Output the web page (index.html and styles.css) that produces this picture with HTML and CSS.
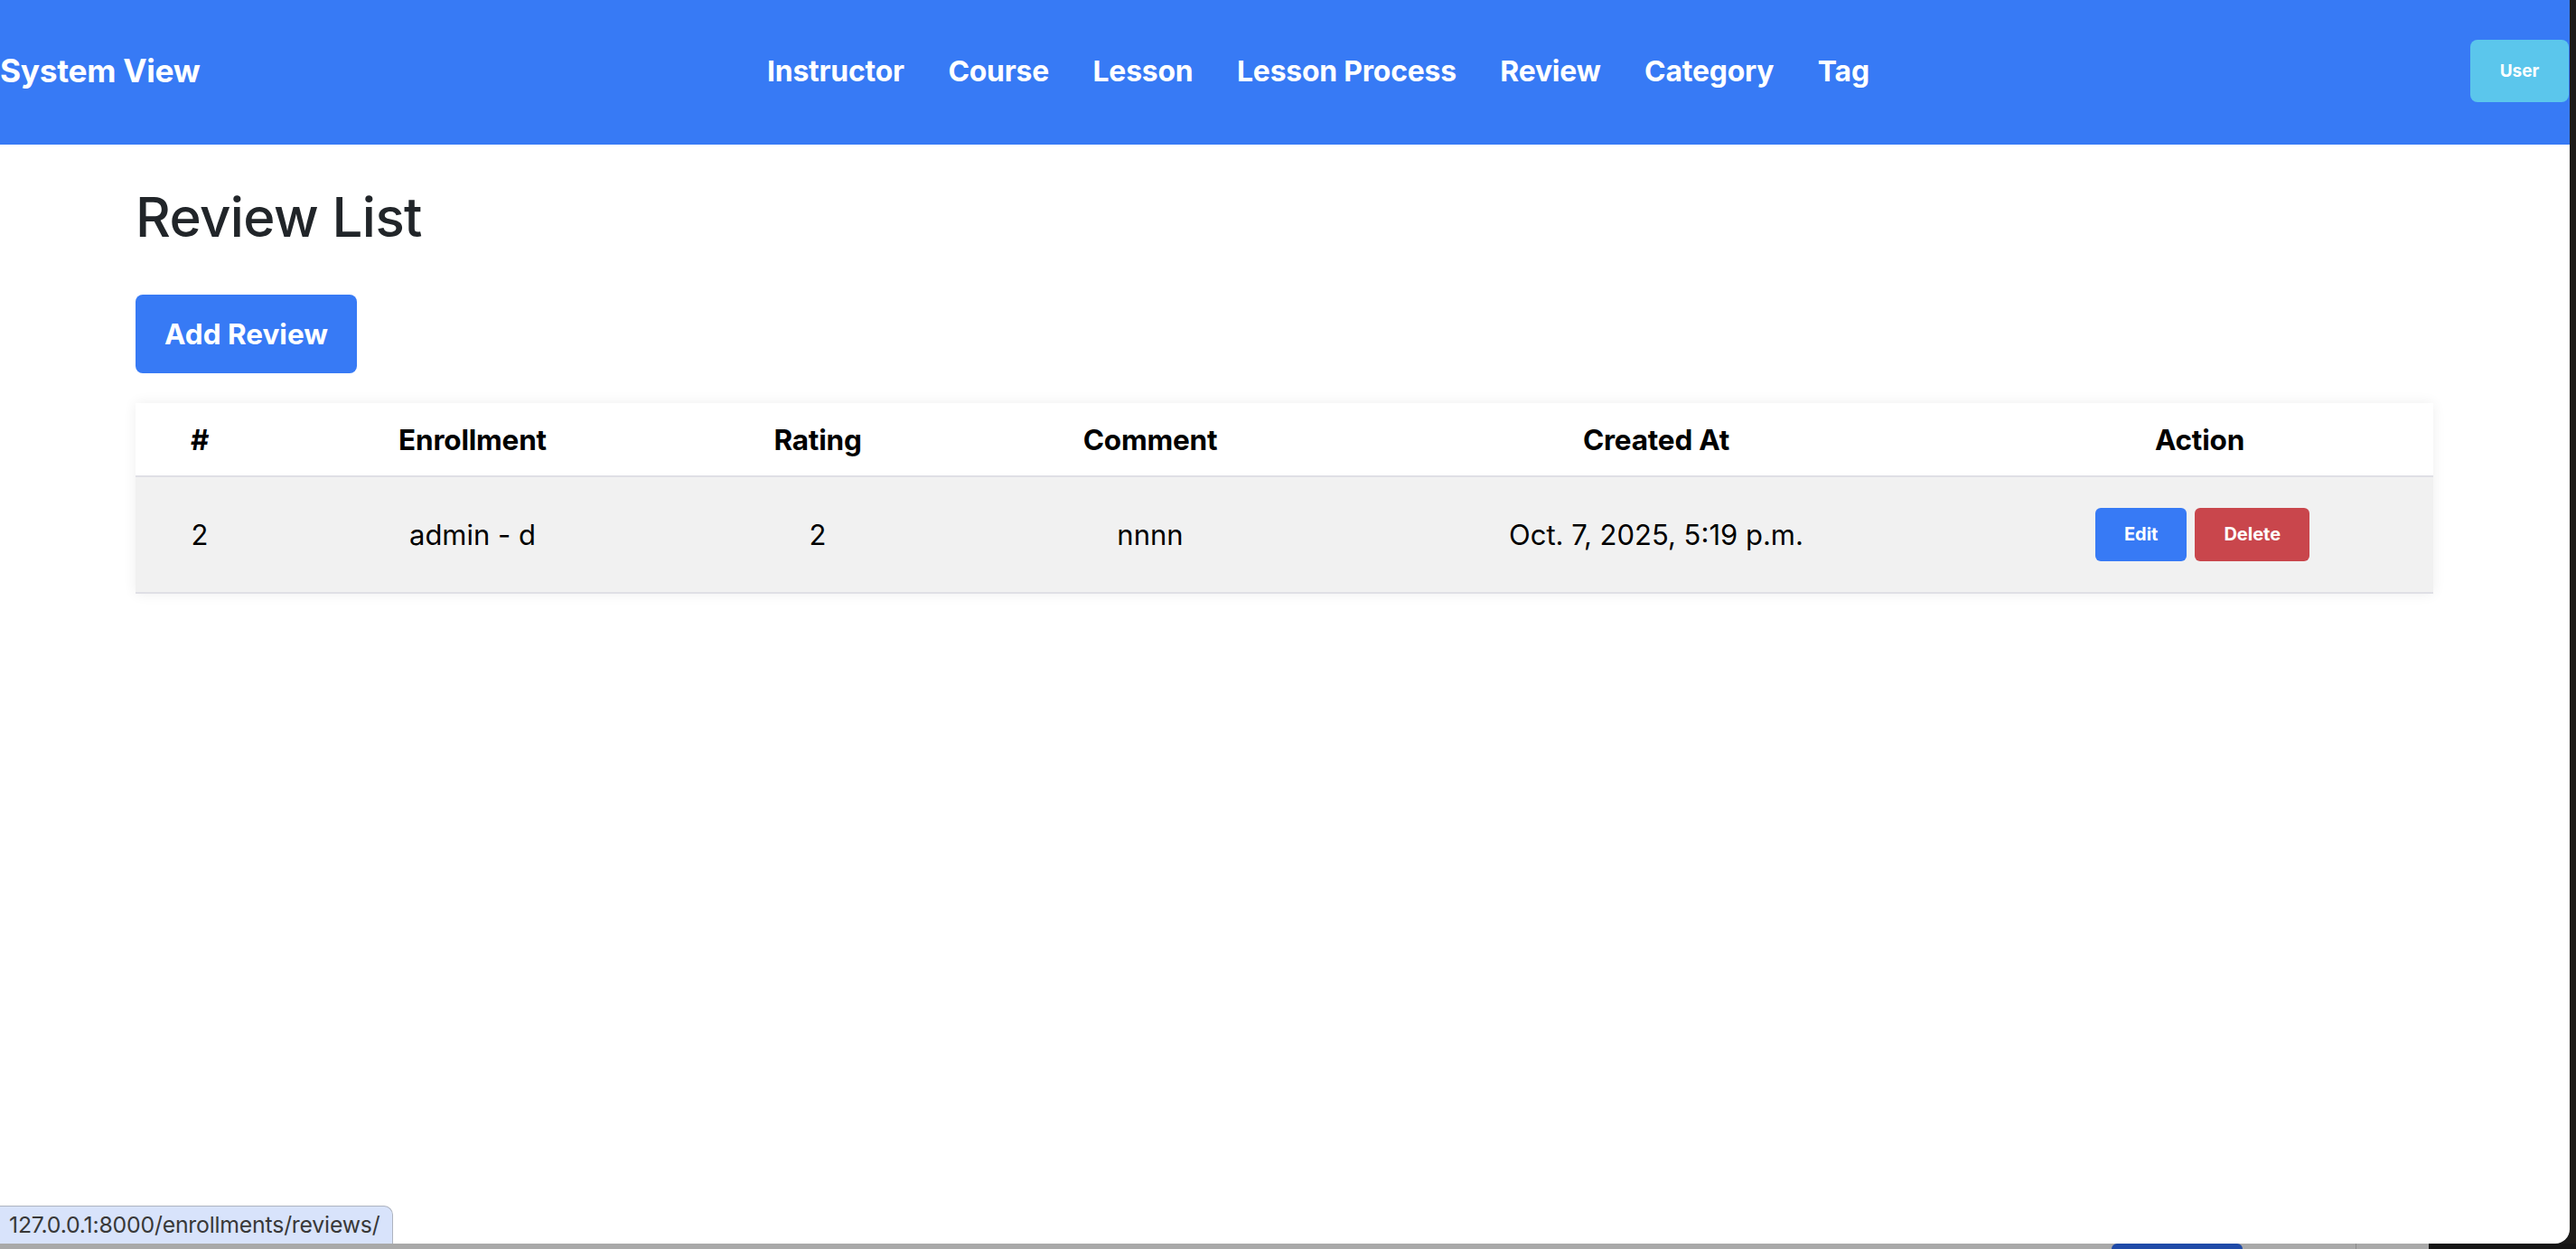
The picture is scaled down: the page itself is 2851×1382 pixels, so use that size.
FILE: index.html
```html
<!DOCTYPE html>
<html lang="en">
<head>
<meta charset="utf-8">
<title>Review List</title>
<link rel="stylesheet" href="styles.css">
</head>
<body>
<div class="screen">
  <div class="window">
    <header class="topbar">
      <a class="brand" href="#">System View</a>
      <nav class="nav">
        <a class="nav-link" href="#">Instructor</a>
        <a class="nav-link" href="#">Course</a>
        <a class="nav-link" href="#">Lesson</a>
        <a class="nav-link" href="#">Lesson Process</a>
        <a class="nav-link" href="#">Review</a>
        <a class="nav-link" href="#">Category</a>
        <a class="nav-link" href="#">Tag</a>
      </nav>
      <button class="user-btn" type="button">User</button>
    </header>

    <main class="container">
      <h1 class="page-title">Review List</h1>
      <a class="btn-add" href="#">Add Review</a>
      <table class="review-table">
        <thead>
          <tr>
            <th class="col-id">#</th>
            <th class="col-enroll">Enrollment</th>
            <th class="col-rating">Rating</th>
            <th class="col-comment">Comment</th>
            <th class="col-created">Created At</th>
            <th class="col-action">Action</th>
          </tr>
        </thead>
        <tbody>
          <tr>
            <td>2</td>
            <td>admin - d</td>
            <td>2</td>
            <td>nnnn</td>
            <td>Oct. 7, 2025, 5:19 p.m.</td>
            <td>
              <div class="action-group">
                <a class="btn-sm btn-edit" href="#">Edit</a>
                <a class="btn-sm btn-delete" href="#">Delete</a>
              </div>
            </td>
          </tr>
        </tbody>
      </table>
    </main>

    <div class="status-url">127.0.0.1:8000/enrollments/reviews/</div>
  </div>
  <div class="right-edge"></div>
</div>
<div class="dock-strip">
  <div class="dock-gray">
    <span class="dock-divider"></span>
    <span class="dock-blue"></span>
  </div>
  <div class="dock-dark"></div>
</div>
</body>
</html>
```

FILE: styles.css
```css
* {
  box-sizing: border-box;
}

html, body {
  margin: 0;
  padding: 0;
}

body {
  width: 2851px;
  height: 1382px;
  overflow: hidden;
  background: #1b1b1b;
  font-family: Inter, "Liberation Sans", sans-serif;
  color: #000;
}

.screen {
  display: flex;
  height: 1376px;
}

.window {
  position: relative;
  width: 2844px;
  height: 1376px;
  background: #ffffff;
  border-bottom-right-radius: 16px;
  overflow: hidden;
}

.right-edge {
  flex: 1;
  background: #1e1b18;
}

.dock-strip {
  display: flex;
  height: 6px;
}

.dock-gray {
  position: relative;
  width: 2688px;
  background: #a9a9a9;
}

.dock-divider {
  position: absolute;
  left: 2607px;
  top: 0;
  width: 1px;
  height: 6px;
  background: #8c8c8c;
}

.dock-blue {
  position: absolute;
  left: 2337px;
  top: 0;
  width: 145px;
  height: 6px;
  background: #1f4aa8;
  border-radius: 6px 6px 0 0;
}

.dock-dark {
  flex: 1;
  background: #161616;
}

/* ---------- Top bar ---------- */
.topbar {
  display: grid;
  grid-template-columns: 849px 1fr auto;
  align-items: center;
  height: 160px;
  padding-bottom: 3px;
  background: #377af5;
}

.brand {
  color: #ffffff;
  text-decoration: none;
  font-size: 35.3px;
  font-weight: 700;
  letter-spacing: -0.3px;
}

.nav {
  display: flex;
  align-items: center;
  gap: 48.5px;
}

.nav-link {
  color: #ffffff;
  text-decoration: none;
  font-size: 31.9px;
  font-weight: 700;
  letter-spacing: -0.2px;
}

.user-btn {
  width: 109px;
  height: 69px;
  margin-right: 1px;
  border: none;
  border-radius: 8px;
  background: #5bc6ec;
  color: #ffffff;
  font-family: Inter, "Liberation Sans", sans-serif;
  font-size: 19px;
  font-weight: 700;
}

/* ---------- Content ---------- */
.container {
  display: flex;
  flex-direction: column;
  align-items: flex-start;
  margin: 0 151px 0 150px;
}

.page-title {
  margin: 44px 0 0 0;
  font-size: 60px;
  font-weight: 500;
  line-height: 72px;
  color: #212529;
  letter-spacing: -0.6px;
}

.btn-add {
  display: inline-block;
  margin-top: 50px;
  padding: 21px 32px;
  background: #377af5;
  color: #ffffff;
  text-decoration: none;
  font-size: 31.5px;
  font-weight: 700;
  line-height: 45px;
  border-radius: 8px;
}

.review-table {
  align-self: stretch;
  margin-top: 33px;
  border-collapse: collapse;
  table-layout: fixed;
  box-shadow: 0 0 14px rgba(0, 0, 0, 0.07);
}

.review-table th,
.review-table td {
  text-align: center;
  vertical-align: middle;
  padding: 0;
}

.review-table th {
  height: 81px;
  background: #ffffff;
  font-size: 31.5px;
  font-weight: 700;
  letter-spacing: -0.2px;
  border-bottom: 2px solid #dfdfe5;
}

.review-table td {
  height: 129px;
  background: #f1f1f1;
  font-size: 31px;
  font-weight: 400;
  border-bottom: 2px solid #dfdfe5;
}

.col-id { width: 142px; }
.col-enroll { width: 462px; }
.col-rating { width: 302px; }
.col-comment { width: 434px; }
.col-created { width: 686px; }
.col-action { width: 517px; }

.action-group {
  display: flex;
  justify-content: center;
  gap: 9px;
  padding-left: 6px;
}

.btn-sm {
  display: inline-block;
  height: 59px;
  padding: 0 32px;
  line-height: 59px;
  border-radius: 6px;
  color: #ffffff;
  text-decoration: none;
  font-size: 20px;
  font-weight: 700;
}

.btn-edit {
  background: #377af5;
}

.btn-delete {
  background: #c9464c;
}

/* ---------- Status URL tooltip ---------- */
.status-url {
  position: absolute;
  left: 0;
  bottom: 0;
  height: 42px;
  padding: 0 14px 0 10px;
  background: #d8e3fb;
  border: 1px solid #aeb3bf;
  border-left: none;
  border-bottom: none;
  border-top-right-radius: 10px;
  color: #383838;
  font-size: 24.8px;
  line-height: 41px;
  letter-spacing: -0.2px;
}
```
